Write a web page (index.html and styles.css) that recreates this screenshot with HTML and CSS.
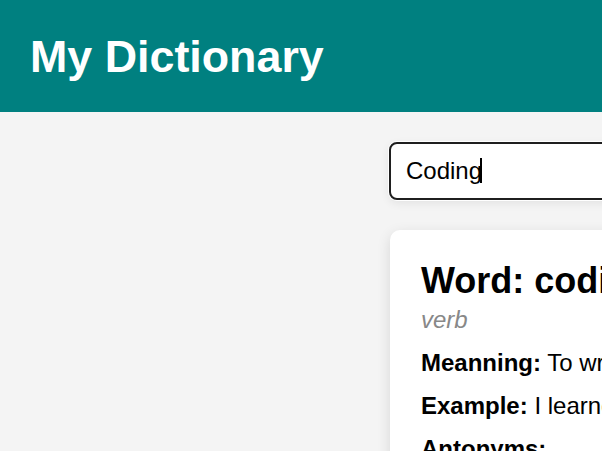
FILE: index.html
```html
<!DOCTYPE html>
<html lang="en">
<head>
<meta charset="utf-8">
<title>My Dictionary</title>
<link rel="stylesheet" href="styles.css">
</head>
<body>
<header class="app-header">
  <h1 class="app-title">My Dictionary</h1>
</header>
<main class="content">
  <div class="search-wrap">
    <input class="search" type="text" value="Coding">
    <span class="caret"></span>
  </div>
  <section class="card">
    <h2 class="word">Word: coding</h2>
    <p class="pos">verb</p>
    <p class="row"><strong>Meanning:</strong> To write computer programs and code.</p>
    <p class="row"><strong>Example:</strong> I learned coding at school last year.</p>
    <p class="row"><strong>Antonyms:</strong></p>
  </section>
</main>
</body>
</html>
```
FILE: styles.css
```css
html, body {
  margin: 0;
  padding: 0;
  overflow: hidden;
}
body {
  background: #f4f4f4;
  font-family: "Liberation Sans", Arial, sans-serif;
  color: #000;
  height: 451px;
}
.app-header {
  background: #008080;
  padding: 30px 30px;
}
.app-title {
  margin: 0;
  color: #fff;
  font-size: 44.8px;
  font-weight: bold;
  line-height: 52px;
}
.content {
  display: flex;
  flex-direction: column;
  align-items: flex-start;
  gap: 30px;
  padding: 30px 0 0 389px;
  overflow: clip;
  height: 339px;
  box-sizing: border-box;
}
.search-wrap {
  position: relative;
  flex: none;
}
.search {
  display: block;
  width: 560px;
  box-sizing: border-box;
  padding: 13px 15px;
  border: 2px solid #1f1f1f;
  border-radius: 8px;
  background: #fff;
  font-family: "Liberation Sans", Arial, sans-serif;
  font-size: 24px;
  color: #000;
  outline: none;
  box-shadow: 0 0 0 1px #fff, 0 3px 10px rgba(0, 0, 0, 0.08);
}
.caret {
  position: absolute;
  left: 91px;
  top: 16px;
  width: 1.5px;
  height: 25px;
  background: #000;
}
.card {
  flex: none;
  width: 560px;
  box-sizing: border-box;
  margin-left: 1px;
  padding: 30px 31px;
  background: #fff;
  border-radius: 10px;
  box-shadow: 0 4px 14px rgba(0, 0, 0, 0.12);
  white-space: nowrap;
}
.word {
  margin: 0 0 4px;
  font-size: 36px;
  font-weight: bold;
}
.pos {
  margin: 0;
  font-size: 24px;
  font-style: italic;
  color: #888;
}
.row {
  margin: 15px 0 0;
  font-size: 24px;
}
```
